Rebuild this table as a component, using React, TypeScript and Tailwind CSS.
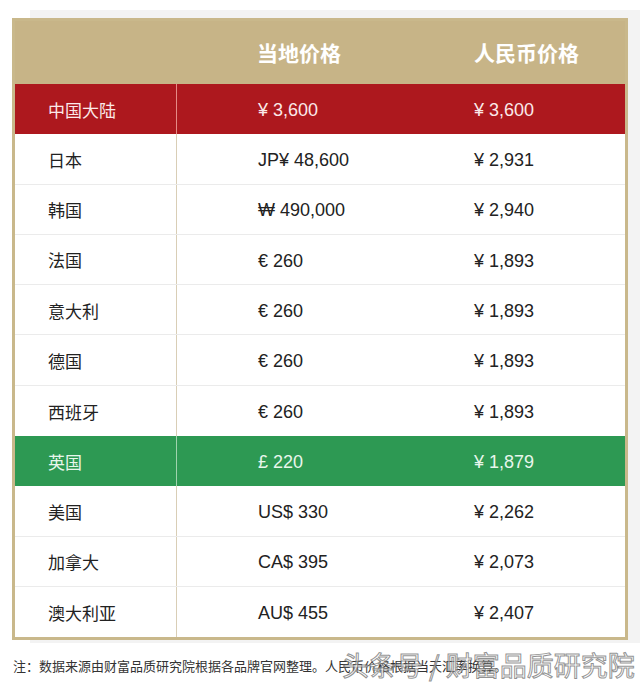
import React from "react";

type Row = { name: string; local: string; rmb: string; tone?: "red" | "green" };

const rows: Row[] = [
  { name: "中国大陆", local: "¥ 3,600", rmb: "¥ 3,600", tone: "red" },
  { name: "日本", local: "JP¥ 48,600", rmb: "¥ 2,931" },
  { name: "韩国", local: "₩ 490,000", rmb: "¥ 2,940" },
  { name: "法国", local: "€ 260", rmb: "¥ 1,893" },
  { name: "意大利", local: "€ 260", rmb: "¥ 1,893" },
  { name: "德国", local: "€ 260", rmb: "¥ 1,893" },
  { name: "西班牙", local: "€ 260", rmb: "¥ 1,893" },
  { name: "英国", local: "£ 220", rmb: "¥ 1,879", tone: "green" },
  { name: "美国", local: "US$ 330", rmb: "¥ 2,262" },
  { name: "加拿大", local: "CA$ 395", rmb: "¥ 2,073" },
  { name: "澳大利亚", local: "AU$ 455", rmb: "¥ 2,407" },
];

const font = { fontFamily: '"Liberation Sans", "Noto Sans CJK SC", sans-serif' };

export default function App() {
  return (
    <div className="w-[640px] h-[688px] bg-white overflow-hidden relative" style={font}>
      <div className="pt-[10px] pl-[30px]">
        <div className="bg-[#f3f3f3] pt-[8px] pb-[3px]">
          <div className="-ml-[18px] w-[616px] border-[3px] border-[#c9b88b] bg-white">
            <div className="flex h-[63px] bg-[#c7b487] text-white font-bold text-[21px] items-center" style={{ fontFamily: '"Noto Sans CJK SC", sans-serif' }}>
              <div className="w-[162px]" />
              <div className="w-[215px] pl-[80px]">当地价格</div>
              <div className="flex-1 pl-[82px]">人民币价格</div>
            </div>
            {rows.map((r, i) => {
              const bg =
                r.tone === "red"
                  ? "bg-[#ad181e] text-[#fbe9e9]"
                  : r.tone === "green"
                  ? "bg-[#2d9953] text-[#e8f6ec]"
                  : "bg-white text-[#222222]";
              const divider =
                r.tone === "red" ? "border-[#e58a86]" : r.tone === "green" ? "border-[#9fd3ad]" : "border-[#d9ceb6]";
              const bottom = i < rows.length - 1 && !r.tone && !rows[i + 1].tone ? "border-b border-[#ebebeb]" : "";
              return (
                <div key={r.name} className={`flex h-[50.3px] items-center text-[18px] ${bg} ${bottom}`}>
                  <div className={`w-[162px] h-full flex items-center pl-[33px] pt-[1px] text-[17px] border-r ${divider}`} style={{ fontFamily: '"Noto Sans CJK SC", sans-serif' }}>
                    {r.name}
                  </div>
                  <div className="w-[215px] pl-[81px] pt-[3px]">{r.local}</div>
                  <div className="flex-1 pl-[82px] pt-[3px]">{r.rmb}</div>
                </div>
              );
            })}
          </div>
        </div>
      </div>
      <div className="pl-[13px] pt-[13px] text-[13px] text-[#333333] whitespace-nowrap" style={{ fontFamily: '"Noto Sans CJK SC", sans-serif' }}>
        注：数据来源由财富品质研究院根据各品牌官网整理。人民币价格根据当天汇率换算。
      </div>
      <div
        className="absolute left-[342px] top-[645px] text-[27px] whitespace-nowrap text-[rgba(255,255,255,0.55)]"
        style={{ fontFamily: '"Noto Sans CJK SC", sans-serif', WebkitTextStroke: "1px rgba(110,110,110,0.75)" }}
      >
        头条号 / 财富品质研究院
      </div>
    </div>
  );
}
